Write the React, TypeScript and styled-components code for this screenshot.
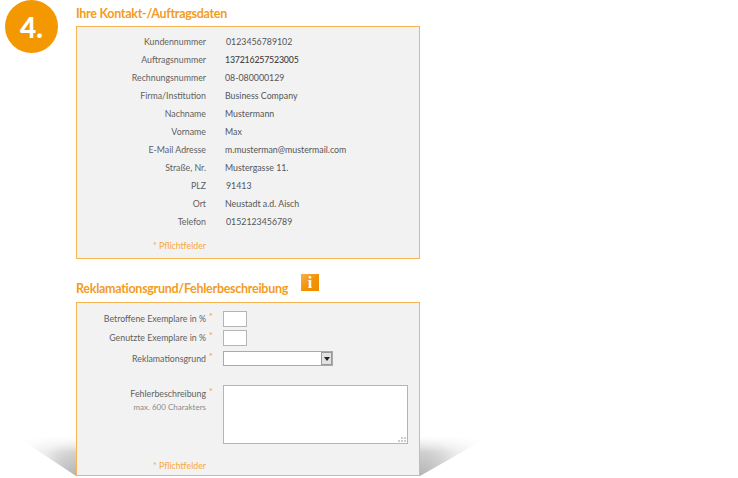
import React from 'react';
import styled, { createGlobalStyle } from 'styled-components';

const contactRows = [
  { label: 'Kundennummer', value: '0123456789102', tone: 'input' },
  { label: 'Auftragsnummer', value: '137216257523005', tone: 'strong' },
  { label: 'Rechnungsnummer', value: '08-080000129', tone: 'plain' },
  { label: 'Firma/Institution', value: 'Business Company', tone: 'plain' },
  { label: 'Nachname', value: 'Mustermann', tone: 'plain' },
  { label: 'Vorname', value: 'Max', tone: 'plain' },
  { label: 'E-Mail Adresse', value: 'm.musterman@mustermail.com', tone: 'plain' },
  { label: 'Straße, Nr.', value: 'Mustergasse 11.', tone: 'plain' },
  { label: 'PLZ', value: '91413', tone: 'input' },
  { label: 'Ort', value: 'Neustadt a.d. Aisch', tone: 'plain' },
  { label: 'Telefon', value: '0152123456789', tone: 'input' },
];

export default function App() {
  return (
    <Page>
      <GlobalStyle />
      <Badge>4.</Badge>
      <Main>
        <Heading>Ihre Kontakt-/Auftragsdaten</Heading>
        <ContactPanel>
          {contactRows.map(row => (
            <ContactRow key={row.label}>
              <ContactLabel>{row.label}</ContactLabel>
              <ContactValue $tone={row.tone}>{row.value}</ContactValue>
            </ContactRow>
          ))}
          <ContactHint>* Pflichtfelder</ContactHint>
        </ContactPanel>

        <ComplaintHeader>
          <ComplaintHeading>Reklamationsgrund/Fehlerbeschreibung</ComplaintHeading>
          <InfoIcon>i</InfoIcon>
        </ComplaintHeader>
        <ComplaintWrap>
          <ComplaintPanel>
            <FieldRow>
              <RowLabel>Betroffene Exemplare in %<Star>*</Star></RowLabel>
              <SmallInput type="text" />
            </FieldRow>
            <FieldRow>
              <RowLabel>Genutzte Exemplare in %<Star>*</Star></RowLabel>
              <SmallInput type="text" />
            </FieldRow>
            <SelectRow>
              <RowLabel>Reklamationsgrund<Star>*</Star></RowLabel>
              <SelectBox>
                <SelectField />
                <SelectArrow>
                  <svg width="6" height="4" viewBox="0 0 6 4"><path d="M0 0h6L3 4z" fill="#222" /></svg>
                </SelectArrow>
              </SelectBox>
            </SelectRow>
            <AreaRow>
              <div>
                <FieldLabel>Fehlerbeschreibung<Star>*</Star></FieldLabel>
                <FieldNote>max. 600 Charakters</FieldNote>
              </div>
              <TextArea />
            </AreaRow>
            <ComplaintHint>* Pflichtfelder</ComplaintHint>
          </ComplaintPanel>
        </ComplaintWrap>
      </Main>
    </Page>
  );
}

const GlobalStyle = createGlobalStyle`
  html, body {
    margin: 0;
    background: #fff;
    overflow: hidden;
  }
`;

const Page = styled.div`
  width: 738px;
  height: 478px;
  overflow: hidden;
  display: flex;
  align-items: flex-start;
  gap: 18px;
  padding-left: 5px;
  box-sizing: border-box;
  font-family: Lato, "Liberation Sans", sans-serif;
`;

const Badge = styled.div`
  width: 53px;
  height: 53px;
  border-radius: 50%;
  background: #f39800;
  color: #fff;
  font-size: 28px;
  font-weight: 900;
  display: flex;
  align-items: center;
  justify-content: center;
  flex-shrink: 0;
`;

const Main = styled.div`
  width: 344px;
  padding-top: 7px;
`;

const Heading = styled.h2`
  margin: 0 0 5px;
  height: 14px;
  font-size: 12.5px;
  line-height: 14px;
  letter-spacing: -0.28px;
  font-weight: 700;
  color: #f39c1f;
`;

const ContactPanel = styled.div`
  height: 233px;
  box-sizing: border-box;
  border: 1px solid #f6b552;
  background: #f2f2f2;
  padding-top: 6px;
`;

const ContactRow = styled.div`
  display: grid;
  grid-template-columns: 129px 1fr;
  column-gap: 19px;
  height: 18px;
  align-items: center;
  font-size: 8.8px;
  line-height: 16px;
`;

const ContactLabel = styled.div`
  text-align: right;
  color: #5f5f5f;
`;

const ContactValue = styled.div<{ $tone: string }>`
  color: ${p => (p.$tone === 'strong' ? '#444' : '#555')};
  font-weight: ${p => (p.$tone === 'strong' ? 500 : 400)};
  letter-spacing: ${p => (p.$tone === 'strong' ? '-0.2px' : '0')};
  padding-left: ${p => (p.$tone === 'input' ? '1px' : '0')};
`;

const ContactHint = styled.div`
  width: 129px;
  margin-top: 8px;
  text-align: right;
  font-size: 8.8px;
  line-height: 14px;
  color: #f7a941;
`;

const ComplaintHeader = styled.div`
  display: flex;
  align-items: flex-end;
  gap: 13px;
  height: 32px;
  margin-top: 6px;
  margin-bottom: 5px;
`;

const ComplaintHeading = styled.h2`
  margin: 0;
  font-size: 12.5px;
  line-height: 16px;
  letter-spacing: -0.28px;
  font-weight: 700;
  color: #f39c1f;
`;

const InfoIcon = styled.div`
  width: 18px;
  height: 17px;
  margin-bottom: 6px;
  background: linear-gradient(135deg, #f7b04a 0%, #f39200 55%, #ee8a00 100%);
  color: #fff;
  font: 700 16px/17px "Liberation Serif", serif;
  text-align: center;
`;

const ComplaintWrap = styled.div`
  position: relative;

  &::before,
  &::after {
    content: '';
    position: absolute;
    bottom: 0;
    height: 40px;
    mask-image: linear-gradient(to bottom, transparent 0, #000 40%);
  }

  &::before {
    left: -60px;
    width: 60px;
    background: radial-gradient(circle at 100% 100%, #b4b4b4 0, #d0d0d0 30%, #ececec 52%, #f8f8f8 75%, #fff 95%);
    clip-path: polygon(0 0, 100% 0, 100% 100%);
  }

  &::after {
    right: -70px;
    width: 70px;
    background: radial-gradient(circle at 0 100%, #b4b4b4 0, #d0d0d0 30%, #ececec 52%, #f8f8f8 75%, #fff 95%);
    clip-path: polygon(0 100%, 100% 0, 0 0);
  }
`;

const ComplaintPanel = styled.div`
  position: relative;
  z-index: 1;
  height: 174px;
  box-sizing: border-box;
  border: 1px solid #f6b552;
  background: #f2f2f2;
  padding-top: 6px;
`;

const FieldRow = styled.div`
  display: grid;
  grid-template-columns: 138px 24px;
  column-gap: 8px;
  height: 19px;
  align-items: center;
`;

const SelectRow = styled(FieldRow)`
  grid-template-columns: 138px 110px;
  margin-top: 2px;
`;

const AreaRow = styled.div`
  display: grid;
  grid-template-columns: 138px 185px;
  column-gap: 8px;
  margin-top: 17px;
  align-items: start;
`;

const FieldLabel = styled.div`
  text-align: right;
  font-size: 8.8px;
  line-height: 14px;
  color: #5f5f5f;
`;

const RowLabel = styled(FieldLabel)`
  margin-bottom: 2px;
`;

const Star = styled.span`
  display: inline-block;
  width: 6px;
  padding-left: 3px;
  text-align: left;
  color: #f39c1f;
  vertical-align: 2px;
`;

const FieldNote = styled.div`
  width: 129px;
  text-align: right;
  font-size: 8px;
  line-height: 12px;
  color: #8a8a8a;
`;

const SmallInput = styled.input`
  width: 24px;
  height: 16px;
  box-sizing: border-box;
  margin: 0;
  padding: 0;
  border: 1px solid #b4b4b4;
  background: #fff;
`;

const SelectBox = styled.div`
  position: relative;
  width: 110px;
  height: 15px;
`;

const SelectField = styled.select`
  display: block;
  appearance: none;
  width: 100%;
  height: 100%;
  box-sizing: border-box;
  margin: 0;
  border: 1px solid #aaa;
  border-radius: 0;
  background: #fff;
`;

const SelectArrow = styled.div`
  position: absolute;
  top: 1px;
  right: 1px;
  width: 11px;
  height: 13px;
  box-sizing: border-box;
  border: 1px solid #999;
  background: #e2e2e2;
  display: flex;
  align-items: center;
  justify-content: center;
`;

const TextArea = styled.textarea`
  display: block;
  width: 185px;
  height: 59px;
  box-sizing: border-box;
  margin: 0;
  padding: 0;
  border: 1px solid #b4b4b4;
  background: #fff;

  &::-webkit-resizer {
    background:
      linear-gradient(#ccc, #ccc) no-repeat right 1px bottom 1px / 2px 2px,
      linear-gradient(#ccc, #ccc) no-repeat right 4px bottom 1px / 2px 2px,
      linear-gradient(#ccc, #ccc) no-repeat right 7px bottom 1px / 2px 2px,
      linear-gradient(#ccc, #ccc) no-repeat right 1px bottom 4px / 2px 2px,
      linear-gradient(#ccc, #ccc) no-repeat right 4px bottom 4px / 2px 2px,
      #fff;
  }
`;

const ComplaintHint = styled(ContactHint)`
  margin-top: 15px;
`;
